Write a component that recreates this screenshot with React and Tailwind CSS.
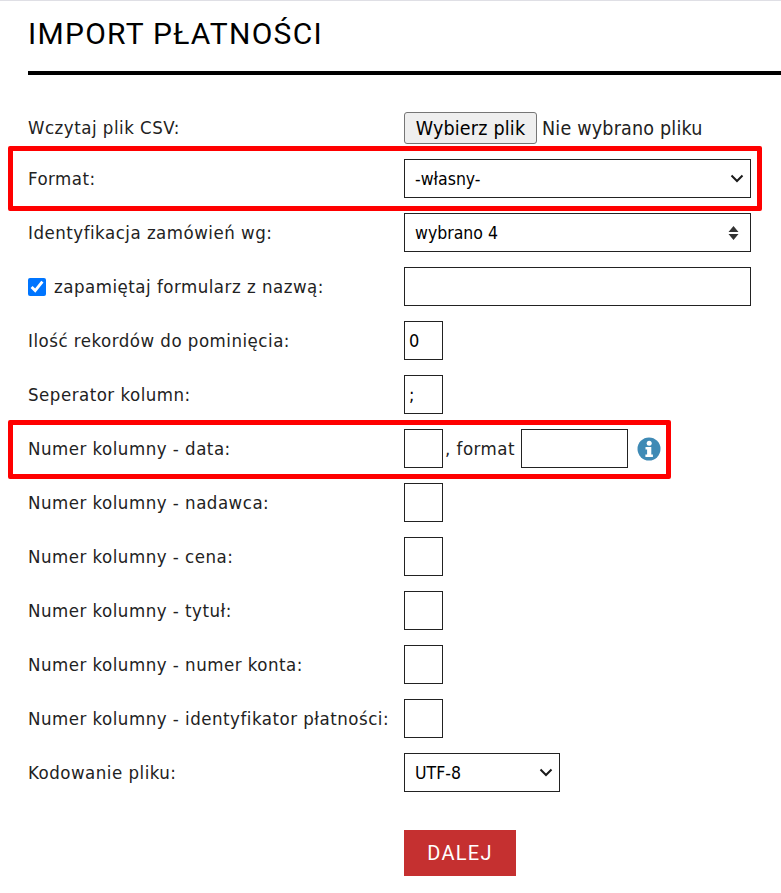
import React from 'react';

const labelClass = 'w-[376px] shrink-0 text-[18.5px] tracking-[0.5px] text-[#222]';
const inputClass = 'h-[39px] border border-[#222] bg-white text-[18px] text-black px-[4px] rounded-none';
const selectClass = 'h-[39px] w-full appearance-none border border-[#222] bg-white text-[17.5px] text-black pl-[10px] pt-[1px] rounded-none';

const Row = ({ label, children }) => (
  <div className="flex items-center h-[39px]">
    <div className={labelClass}>{label}</div>
    {children}
  </div>
);

const InfoIcon = () => (
  <svg width="24" height="24" viewBox="0 0 24 24" className="ml-[9px] shrink-0">
    <circle cx="12" cy="12" r="11.5" fill="#3f8ab5" />
    <circle cx="12.2" cy="6.2" r="2.5" fill="#fff" />
    <path d="M8.5 10h5.8v7.6h1.6v2.4H8.4v-2.4h1.7v-5.2H8.5z" fill="#fff" />
  </svg>
);

const Chevron = () => (
  <svg width="14" height="9" viewBox="0 0 14 9" className="absolute right-[7px] top-[15px] pointer-events-none">
    <path d="M1.5 1.5L7 7l5.5-5.5" fill="none" stroke="#1a1a1a" strokeWidth="2" />
  </svg>
);

const columnRows = [
  'Numer kolumny - nadawca:',
  'Numer kolumny - cena:',
  'Numer kolumny - tytuł:',
  'Numer kolumny - numer konta:',
  'Numer kolumny - identyfikator płatności:',
];

export default function App() {
  return (
    <div className="relative min-h-[893px] bg-white border-t border-[#dfdfe5] pl-[28px] font-['DejaVu_Sans_Condensed','DejaVu_Sans',sans-serif] overflow-hidden">
      <h1 className="h-[70px] pt-[15px] text-[30px] leading-[36px] tracking-[1.3px] text-black font-['Roboto',sans-serif]">
        IMPORT PŁATNOŚCI
      </h1>
      <div className="h-[4px] bg-black" />

      <div className="flex flex-col gap-[15px] pt-[30px]">
        <div className="flex items-center h-[39px] pt-[7px]">
          <div className={labelClass}>Wczytaj plik CSV:</div>
          <button className="h-[32px] w-[133px] pt-[1px] border border-[#767676] rounded-[3px] bg-[#efefef] text-[19.5px] tracking-[0.2px] text-black">
            Wybierz plik
          </button>
          <span className="ml-[5px] pt-[2px] text-[19.5px] tracking-[0.2px] text-[#222]">Nie wybrano pliku</span>
        </div>

        <Row label="Format:">
          <div className="relative w-[347px]">
            <select className={selectClass} defaultValue="own">
              <option value="own">-własny-</option>
            </select>
            <Chevron />
          </div>
        </Row>

        <Row label="Identyfikacja zamówień wg:">
          <div className="h-[39px] w-[347px] border border-[#222] bg-white text-[17.5px] text-black flex items-center justify-between pl-[10px] pr-[11px]">
            <span className="pt-[1px]">wybrano 4</span>
            <svg width="11" height="16" viewBox="0 0 11 16">
              <path d="M5.5 1L10.5 7H0.5z M5.5 15L0.5 9H10.5z" fill="#333" />
            </svg>
          </div>
        </Row>

        <div className="flex items-center h-[39px]">
          <label className={`${labelClass} flex items-center gap-[8px]`}>
            <input type="checkbox" defaultChecked className="w-[18px] h-[18px] accent-[#0075ff]" />
            zapamiętaj formularz z nazwą:
          </label>
          <input className={`${inputClass} w-[347px]`} />
        </div>

        <Row label="Ilość rekordów do pominięcia:">
          <input className={`${inputClass} w-[39px]`} defaultValue="0" />
        </Row>

        <Row label="Seperator kolumn:">
          <input className={`${inputClass} w-[39px]`} defaultValue=";" />
        </Row>

        <Row label="Numer kolumny - data:">
          <input className={`${inputClass} w-[39px]`} />
          <span className="w-[78px] text-[18.5px] tracking-[0.5px] text-[#222] pl-[2px]">, format</span>
          <input className={`${inputClass} w-[107px]`} />
          <InfoIcon />
        </Row>

        {columnRows.map((label) => (
          <Row key={label} label={label}>
            <input className={`${inputClass} w-[39px]`} />
          </Row>
        ))}

        <Row label="Kodowanie pliku:">
          <div className="relative w-[156px]">
            <select className={selectClass} defaultValue="utf8">
              <option value="utf8">UTF-8</option>
            </select>
            <Chevron />
          </div>
        </Row>
      </div>

      <button className="block ml-[376px] mt-[38px] w-[112px] h-[46px] bg-[#c53030] text-white text-[20px] tracking-[1.3px] font-['Roboto',sans-serif]">
        DALEJ
      </button>

      {/* red highlight frames */}
      <div className="absolute left-[8px] top-[145px] w-[754px] h-[65px] border-[5px] border-[#ff0000] rounded-[2px] pointer-events-none" />
      <div className="absolute left-[8px] top-[419px] w-[663px] h-[59px] border-[5px] border-[#ff0000] rounded-[2px] pointer-events-none" />
    </div>
  );
}
